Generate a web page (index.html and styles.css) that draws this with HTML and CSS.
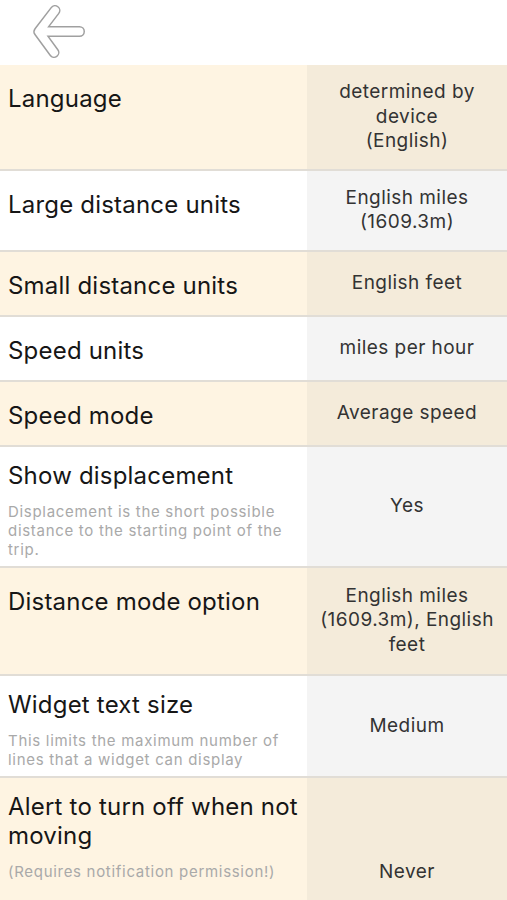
FILE: index.html
```html
<!DOCTYPE html>
<html lang="en">
<head>
    <meta charset="UTF-8">
    <meta name="viewport" content="width=device-width, initial-scale=1.0">
    <title>Settings</title>
    <link rel="stylesheet" href="styles.css">
</head>
<body>
    <!-- Top bar with back button -->
    <header class="top-bar">
        <button class="back-button" aria-label="Back">
            <svg width="64" height="56" viewBox="0 0 64 56">
                <g fill="none" stroke-linecap="round" stroke-linejoin="round">
                    <path d="M57.5 27.5 H19 M33 6.5 L16.8 27.7 L32 48.5" stroke="#a0a0a0" stroke-width="11"/>
                    <path d="M57.5 27.5 H19 M33 6.5 L16.8 27.7 L32 48.5" stroke="#ffffff" stroke-width="8"/>
                </g>
            </svg>
        </button>
    </header>

    <!-- Settings list -->
    <div class="settings">
        <div class="row cream">
            <div class="label"><div class="title">Language</div></div>
            <div class="value">determined by device<br>(English)</div>
        </div>

        <div class="row">
            <div class="label"><div class="title">Large distance units</div></div>
            <div class="value">English miles (1609.3m)</div>
        </div>

        <div class="row cream">
            <div class="label"><div class="title">Small distance units</div></div>
            <div class="value">English feet</div>
        </div>

        <div class="row">
            <div class="label"><div class="title">Speed units</div></div>
            <div class="value">miles per hour</div>
        </div>

        <div class="row cream">
            <div class="label"><div class="title">Speed mode</div></div>
            <div class="value">Average speed</div>
        </div>

        <div class="row">
            <div class="label has-note">
                <div class="title">Show displacement</div>
                <div class="note">Displacement is the short possible distance to the starting point of the trip.</div>
            </div>
            <div class="value">Yes</div>
        </div>

        <div class="row cream">
            <div class="label"><div class="title">Distance mode option</div></div>
            <div class="value tall">English miles (1609.3m), English feet</div>
        </div>

        <div class="row">
            <div class="label has-note">
                <div class="title">Widget text size</div>
                <div class="note">This limits the maximum number of lines that a widget can display</div>
            </div>
            <div class="value">Medium</div>
        </div>

        <div class="row cream last">
            <div class="label has-note">
                <div class="title">Alert to turn off when not moving</div>
                <div class="note">(Requires notification permission!)</div>
            </div>
            <div class="value">Never</div>
        </div>
    </div>
</body>
</html>
```

FILE: styles.css
```css
/* Page */
body {
    margin: 0;
    background: #ffffff;
    font-family: Inter, "Liberation Sans", sans-serif;
    color: #161616;
}

/* Top bar */
.top-bar {
    height: 65px;
    display: flex;
    align-items: flex-start;
    padding-left: 22px;
}

.back-button {
    appearance: none;
    border: 0;
    background: transparent;
    padding: 0;
    margin-top: 4px;
    cursor: pointer;
}

.back-button svg {
    display: block;
}

/* Rows */
.row {
    display: grid;
    grid-template-columns: 307px 1fr;
    border-bottom: 2px solid #e1ddd6;
    background: #ffffff;
}

.row .value {
    background: #f4f4f4;
}

.row.cream {
    background: #fef4e2;
}

.row.cream .value {
    background: #f4ebda;
}

.row.last {
    min-height: 189px;
    border-bottom: 0;
}

/* Left column */
.label {
    padding: 19px 4px 15px 8px;
}

.label.has-note {
    padding-top: 14px;
    padding-bottom: 7px;
}

.title {
    font-size: 24px;
    line-height: 29px;
    letter-spacing: 0.2px;
}

.note {
    margin-top: 12px;
    margin-right: 8px;
    font-size: 15px;
    line-height: 19px;
    letter-spacing: 0.7px;
    color: #a9a9a9;
}

/* Right column */
.value {
    display: flex;
    align-items: center;
    justify-content: center;
    text-align: center;
    padding: 15px 10px;
    font-size: 19px;
    line-height: 24.5px;
    letter-spacing: 0.45px;
    color: #333333;
}

.value.tall {
    padding: 16px 10px 17px;
}
```
